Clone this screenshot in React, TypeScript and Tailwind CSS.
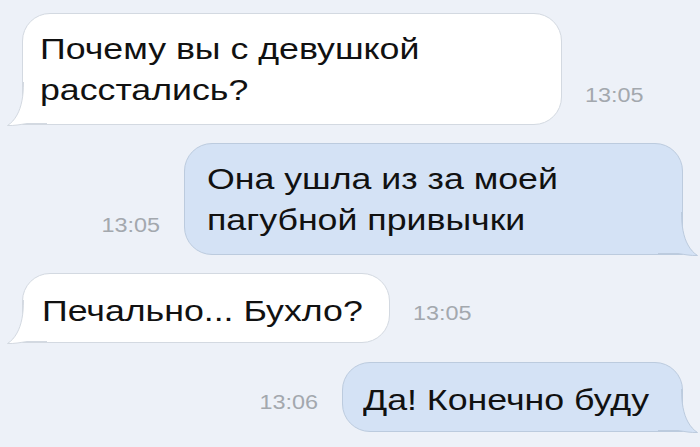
import React from "react";

const FONT = { fontFamily: '"Liberation Sans", Arial, Helvetica, sans-serif' };

const TAIL_OUTLINE = "M16.5 0 C16.5 14 14.5 25 10 33 C7.5 37.5 4.5 41 0.5 43.5 C7 43.8 13 42.6 20 41.5 L40 41.5";

// Curved iOS-style tail that flares out of a bubble's bottom corner.
function Tail({ fill, stroke, side }: { fill: string; stroke: string; side: "left" | "right" }) {
  const pos =
    side === "left"
      ? "absolute left-[-16px] bottom-[-4px]"
      : "absolute right-[-16px] bottom-[-4px] -scale-x-100";
  return (
    <svg className={pos} width="40" height="46" viewBox="0 0 40 46">
      <path d={`${TAIL_OUTLINE} L40 0 Z`} fill={fill} />
      <path d={TAIL_OUTLINE} fill="none" stroke={stroke} strokeWidth="1" />
    </svg>
  );
}

function Bubble({
  lines,
  mine,
  width,
  padLeft,
}: {
  lines: string[];
  mine: boolean;
  width: string;
  padLeft: string;
}) {
  const base = mine
    ? "bg-[#d4e2f5] border-[#bccbde] rounded-[28px] rounded-br-none"
    : "bg-white border-[#d3d9e1] rounded-[28px] rounded-bl-none";
  const pad = lines.length > 1 ? "py-[14px]" : "pt-[16px] pb-[11px]";
  return (
    <div className={`relative border ${pad} ${base} ${width} ${padLeft}`}>
      <Tail
        fill={mine ? "#d4e2f5" : "#ffffff"}
        stroke={mine ? "#bccbde" : "#d3d9e1"}
        side={mine ? "right" : "left"}
      />
      <div className="relative text-[30px] leading-[41px] text-[#111111]">
        {lines.map((l, i) => (
          <div key={i} className="whitespace-nowrap">
            <span className="inline-block origin-left scale-x-[1.19]">{l}</span>
          </div>
        ))}
      </div>
    </div>
  );
}

function Time({ value, side }: { value: string; side: "left" | "right" }) {
  return (
    <div
      className={`mb-[20px] text-[20px] leading-[20px] text-[#a3a8ae] ${
        side === "left" ? "ml-[23px]" : "mr-[24px]"
      }`}
    >
      <span className={`inline-block scale-x-[1.17] ${side === "left" ? "origin-left" : "origin-right"}`}>
        {value}
      </span>
    </div>
  );
}

export default function App() {
  return (
    <div className="w-[700px] h-[447px] overflow-hidden bg-[#edf1f8] flex flex-col pt-[13px]" style={FONT}>
      <div className="flex items-end pl-[22px]">
        <Bubble lines={["Почему вы с девушкой", "расстались?"]} mine={false} width="w-[540px]" padLeft="pl-[17px]" />
        <Time value="13:05" side="left" />
      </div>

      <div className="flex items-end justify-end pr-[17px] mt-[18px]">
        <Time value="13:05" side="right" />
        <Bubble lines={["Она ушла из за моей", "пагубной привычки"]} mine={true} width="w-[499px]" padLeft="pl-[22px]" />
      </div>

      <div className="flex items-end pl-[22px] mt-[18px]">
        <Bubble lines={["Печально... Бухло?"]} mine={false} width="w-[368px]" padLeft="pl-[19px]" />
        <Time value="13:05" side="left" />
      </div>

      <div className="flex items-end justify-end pr-[17px] mt-[19px]">
        <Time value="13:06" side="right" />
        <Bubble lines={["Да! Конечно буду"]} mine={true} width="w-[341px]" padLeft="pl-[20px]" />
      </div>
    </div>
  );
}
